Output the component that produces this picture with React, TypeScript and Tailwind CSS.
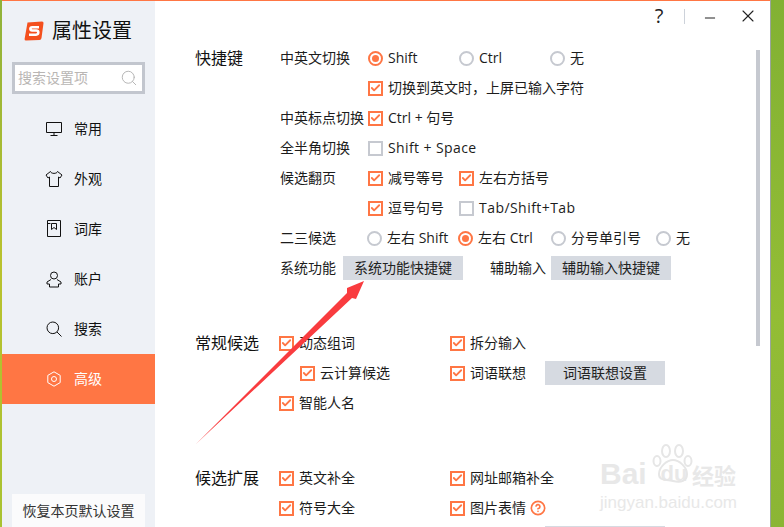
import type { ReactNode } from "react"
import { Check, CircleHelp, Minus, Search, X } from "lucide-react"

const navItems = [
  { label: "常用", icon: <MonitorIcon /> },
  { label: "外观", icon: <ShirtIcon /> },
  { label: "词库", icon: <BookIcon /> },
  { label: "账户", icon: <UserIcon /> },
  { label: "搜索", icon: <SearchIcon /> },
  { label: "高级", icon: <GearIcon />, active: true },
]

function MonitorIcon() {
  return (
    <svg width="16" height="16" viewBox="0 0 16 16" fill="none" stroke="currentColor">
      <path d="M.5 1.5h15v10H.5zM8 11.5v3M4.500 14.500h7" />
    </svg>
  )
}

function ShirtIcon() {
  return (
    <svg width="18" height="18" viewBox="0 0 18 18" fill="none" stroke="currentColor">
      <path d="M5.500 1.500 1 5l2 3 1.500-1v9.500h9V7l1.500 1 2-3-4.500-3.500C12 4 6 4 5.500 1.500Z" />
    </svg>
  )
}

function BookIcon() {
  return (
    <svg width="14" height="18" viewBox="0 0 14 18" fill="none" stroke="currentColor">
      <path d="M.5.500h13v16H.5zM.5 3.500h3M4.500 3.500h5v6L7 7.500l-2.500 2z" />
    </svg>
  )
}

function UserIcon() {
  return (
    <svg width="16" height="17" viewBox="0 0 16 17" fill="none" stroke="currentColor">
      <circle cx="8" cy="4.500" r="3.500" />
      <path d="M5 8.500 1 11v2h2.500v3h9v-3H15v-2l-4-2.500" />
    </svg>
  )
}

function SearchIcon() {
  return (
    <svg width="16" height="16" viewBox="0 0 16 16" fill="none" stroke="currentColor">
      <circle cx="6.800" cy="6.800" r="5.800" />
      <path d="m11 11 4.500 4.500" />
    </svg>
  )
}

function GearIcon() {
  return (
    <svg width="16" height="16" viewBox="0 0 16 16" fill="none" stroke="currentColor">
      <path d="M8 .8 14.200 4.400v7.200L8 15.200 1.800 11.600V4.400Z" strokeLinejoin="round" />
      <circle cx="8" cy="8" r="2.500" />
    </svg>
  )
}

function Box({ checked }: { checked?: boolean }) {
  return (
    <span
      className={`flex h-[15px] w-[15px] shrink-0 items-center justify-center border-2 ${
        checked ? "border-[#ff7644]" : "border-[#c6c9d0]"
      }`}
    >
      {checked ? <Check className="h-3 w-3 text-[#ff7644]" strokeWidth={4} /> : null}
    </span>
  )
}

function Radio({ checked }: { checked?: boolean }) {
  return (
    <span
      className={`flex h-[15px] w-[15px] shrink-0 items-center justify-center rounded-full border-2 ${
        checked ? "border-[#ff7644]" : "border-[#c6c9d0]"
      }`}
    >
      {checked ? <span className="h-[7px] w-[7px] rounded-full bg-[#ff7644]" /> : null}
    </span>
  )
}

function CheckItem({ label, checked = true, width }: { label: ReactNode; checked?: boolean; width: string }) {
  return (
    <span className={`flex items-center gap-[5px] ${width}`}>
      <Box checked={checked} />
      <span>{label}</span>
    </span>
  )
}

function RadioItem({ label, checked, width }: { label: string; checked?: boolean; width: string }) {
  return (
    <span className={`flex items-center gap-[5px] ${width}`}>
      <Radio checked={checked} />
      <span>{label}</span>
    </span>
  )
}

function GrayButton({ children }: { children: string }) {
  return (
    <button type="button" className="h-6 w-[120px] shrink-0 bg-[#d6dae1] text-center text-[14px] leading-6 text-[#222]">
      {children}
    </button>
  )
}

function Row({ label, children }: { label?: string; children: ReactNode }) {
  return (
    <div className="flex h-[30px] items-center">
      <span className="w-[88px] shrink-0">{label}</span>
      {children}
    </div>
  )
}

function Section({ title, className, children }: { title: string; className: string; children: ReactNode }) {
  return (
    <section className={`flex ${className}`}>
      <h2 className="w-[85px] shrink-0 text-[16px] leading-[30px] text-[#111]">{title}</h2>
      <div className="min-w-0 flex-1">{children}</div>
    </section>
  )
}

export default function App() {
  return (
    <div
      className="flex h-[527px] w-[784px] overflow-hidden bg-[linear-gradient(180deg,#82b133,#93bd35_60%,#8bb534)] text-[14px] leading-5 text-[#1c1c1c]"
      style={{ fontFamily: '"Open Sans", "Noto Sans CJK SC", sans-serif' }}
    >
      <div className="w-0.5 shrink-0 bg-[linear-gradient(180deg,#8fb23a,#b9c22e_50%,#a8c232)]" />

      <div className="relative flex h-full w-[768px] shrink-0 border-t border-[#ff7644] bg-white">
        <aside className="flex w-[153px] shrink-0 flex-col bg-[#eef1f6]">
          <div className="flex h-[61px] items-center gap-2 pb-[2px] pl-[22px]">
            <svg width="20" height="20" viewBox="0 0 20 20" className="shrink-0">
              <path d="M3.500 1.500 18 .5q1.800 0 1.500 1.800L17.500 17q-.3 1.800-2 2L2 19.600Q.4 19.600.6 18Z" fill="#f4501e" />
              <path d="M15 6.200H8.200q-1.800 0-1.800 1.600t1.800 1.700h4q2.200 0 2.100 2t-2.300 2.200H5" fill="none" stroke="#fff" strokeWidth="2.600" />
            </svg>
            <span className="text-[20px] leading-7 text-[#111]">属性设置</span>
          </div>

          <div className="mx-[10px] flex h-8 items-center justify-between border-[3px] border-[#c2c6ce] bg-white pl-[3px] pr-[4px]">
            <span className="text-[#b9b6b4]">搜索设置项</span>
            <Search className="h-[18px] w-[18px] text-[#b5b5b5]" strokeWidth={1.300} />
          </div>

          <nav className="mt-[10px]">
            {navItems.map((item) => (
              <div
                key={item.label}
                className={`flex h-[50px] items-center ${item.active ? "bg-[#ff7644] text-white" : "text-[#111]"}`}
              >
                <span className="flex w-[72px] justify-center pl-[36px] pr-[4px]">{item.icon}</span>
                <span>{item.label}</span>
              </div>
            ))}
          </nav>

          <div className="mx-[10px] mt-auto flex h-[33px] items-center justify-center bg-[#fbfbfc] text-[#333]">
            恢复本页默认设置
          </div>
        </aside>

        <main className="min-w-0 flex-1 overflow-hidden pl-10">
          <Section title="快捷键" className="pt-[42px]">
            <Row label="中英文切换">
              <RadioItem label="Shift" checked width="w-[91px]" />
              <RadioItem label="Ctrl" width="w-[91px]" />
              <RadioItem label="无" width="w-[60px]" />
            </Row>
            <Row>
              <CheckItem label="切换到英文时，上屏已输入字符" width="w-[300px]" />
            </Row>
            <Row label="中英标点切换">
              <CheckItem label="Ctrl + 句号" width="w-[200px]" />
            </Row>
            <Row label="全半角切换">
              <CheckItem label={<span className="tracking-[0.4px]">Shift + Space</span>} checked={false} width="w-[200px]" />
            </Row>
            <Row label="候选翻页">
              <CheckItem label="减号等号" width="w-[91px]" />
              <CheckItem label="左右方括号" width="w-[120px]" />
            </Row>
            <Row>
              <CheckItem label="逗号句号" width="w-[91px]" />
              <CheckItem label={<span className="tracking-[0.45px]">Tab/Shift+Tab</span>} checked={false} width="w-[150px]" />
            </Row>
            <Row label="二三候选">
              <span className="-ml-px flex items-center">
                <RadioItem label="左右 Shift" width="w-[91px]" />
                <RadioItem label="左右 Ctrl" checked width="w-[93px]" />
                <RadioItem label="分号单引号" width="w-[105px]" />
                <RadioItem label="无" width="w-[40px]" />
              </span>
            </Row>
            <div className="flex h-[30px] items-center">
              <span className="w-[63px] shrink-0">系统功能</span>
              <GrayButton>系统功能快捷键</GrayButton>
              <span className="ml-[27px] w-[61px] shrink-0">辅助输入</span>
              <GrayButton>辅助输入快捷键</GrayButton>
            </div>
          </Section>

          <Section title="常规候选" className="pt-[45px]">
            <div className="-ml-px flex h-[30px] items-center">
              <CheckItem label="动态组词" width="w-[171px]" />
              <CheckItem label="拆分输入" width="w-[100px]" />
            </div>
            <div className="flex h-[30px] items-center pl-5">
              <CheckItem label="云计算候选" width="w-[150px]" />
              <CheckItem label="词语联想" width="w-[95px]" />
              <GrayButton>词语联想设置</GrayButton>
            </div>
            <div className="-ml-px flex h-[30px] items-center">
              <CheckItem label="智能人名" width="w-[171px]" />
            </div>
          </Section>

          <Section title="候选扩展" className="pt-[45px]">
            <div className="-ml-px flex h-[30px] items-center">
              <CheckItem label="英文补全" width="w-[171px]" />
              <CheckItem label="网址邮箱补全" width="w-[130px]" />
            </div>
            <div className="-ml-px flex h-[30px] items-center">
              <CheckItem label="符号大全" width="w-[171px]" />
              <CheckItem
                label={
                  <span className="flex items-center gap-1">
                    图片表情
                    <CircleHelp className="h-4 w-4 text-[#ff7644]" strokeWidth={2.500} />
                  </span>
                }
                width="w-[120px]"
              />
            </div>
            <div className="flex h-[30px] items-center pl-[265px]">
              <div className="h-6 w-[120px] shrink-0 bg-[#d6dae1]" />
            </div>
          </Section>
        </main>

        <div className="absolute right-[12px] top-[5px] flex items-center text-[#222]">
          <span className="w-[26px] text-center text-[20px] leading-[20px]">?</span>
          <span className="ml-3 mr-[17px] h-[15px] w-px bg-[#cdd2da]" />
          <Minus className="mr-5 mt-1 h-4 w-4" strokeWidth={1.500} />
          <X className="h-5 w-5" strokeWidth={1.300} />
        </div>

        <div className="absolute left-[754px] top-[49px] h-[296px] w-1 bg-[#c6c9d0]" />

        {/* viewBox uses page coordinates so the arrow can be read off the picture */}
        <svg className="absolute left-[190px] top-[275px]" width="180" height="175" viewBox="192 276 180 175">
          <path d="M196 444 347 293 347 288 364 281 356 299 352 298Z" fill="#f93c3f" />
        </svg>

        <div className="pointer-events-none absolute left-[598px] top-[442px] h-[68px] w-[144px] text-[#e8e8e8]" style={{ fontFamily: '"Liberation Sans", sans-serif' }}>
          <svg className="absolute left-[52px] top-0" width="42" height="42" viewBox="0 0 42 42" fill="none" stroke="#e6e6e6" strokeWidth="2">
            <ellipse cx="5" cy="18" rx="3.500" ry="5" />
            <ellipse cx="14" cy="8" rx="4" ry="6" />
            <ellipse cx="27" cy="8" rx="4" ry="6" />
            <ellipse cx="36" cy="18" rx="3.500" ry="5" />
            <path d="M21 17c6 0 14 7 14 14s-6 9-14 7-14 0-14-7 8-14 14-14Z" />
          </svg>
          <div className="flex items-center pt-[15px] font-bold">
            <span className="w-[56px] text-[30px] leading-8">Bai</span>
            <span className="w-[36px] text-center text-[22px] leading-8">du</span>
            <span className="text-[22px] leading-8" style={{ fontFamily: '"Noto Sans CJK SC", sans-serif' }}>经验</span>
          </div>
          <div className="mt-[3px] text-[17px] leading-5">jingyan.baidu.com</div>
        </div>
      </div>

      <div className="w-px shrink-0 bg-[#9aa59a]" />
    </div>
  )
}
